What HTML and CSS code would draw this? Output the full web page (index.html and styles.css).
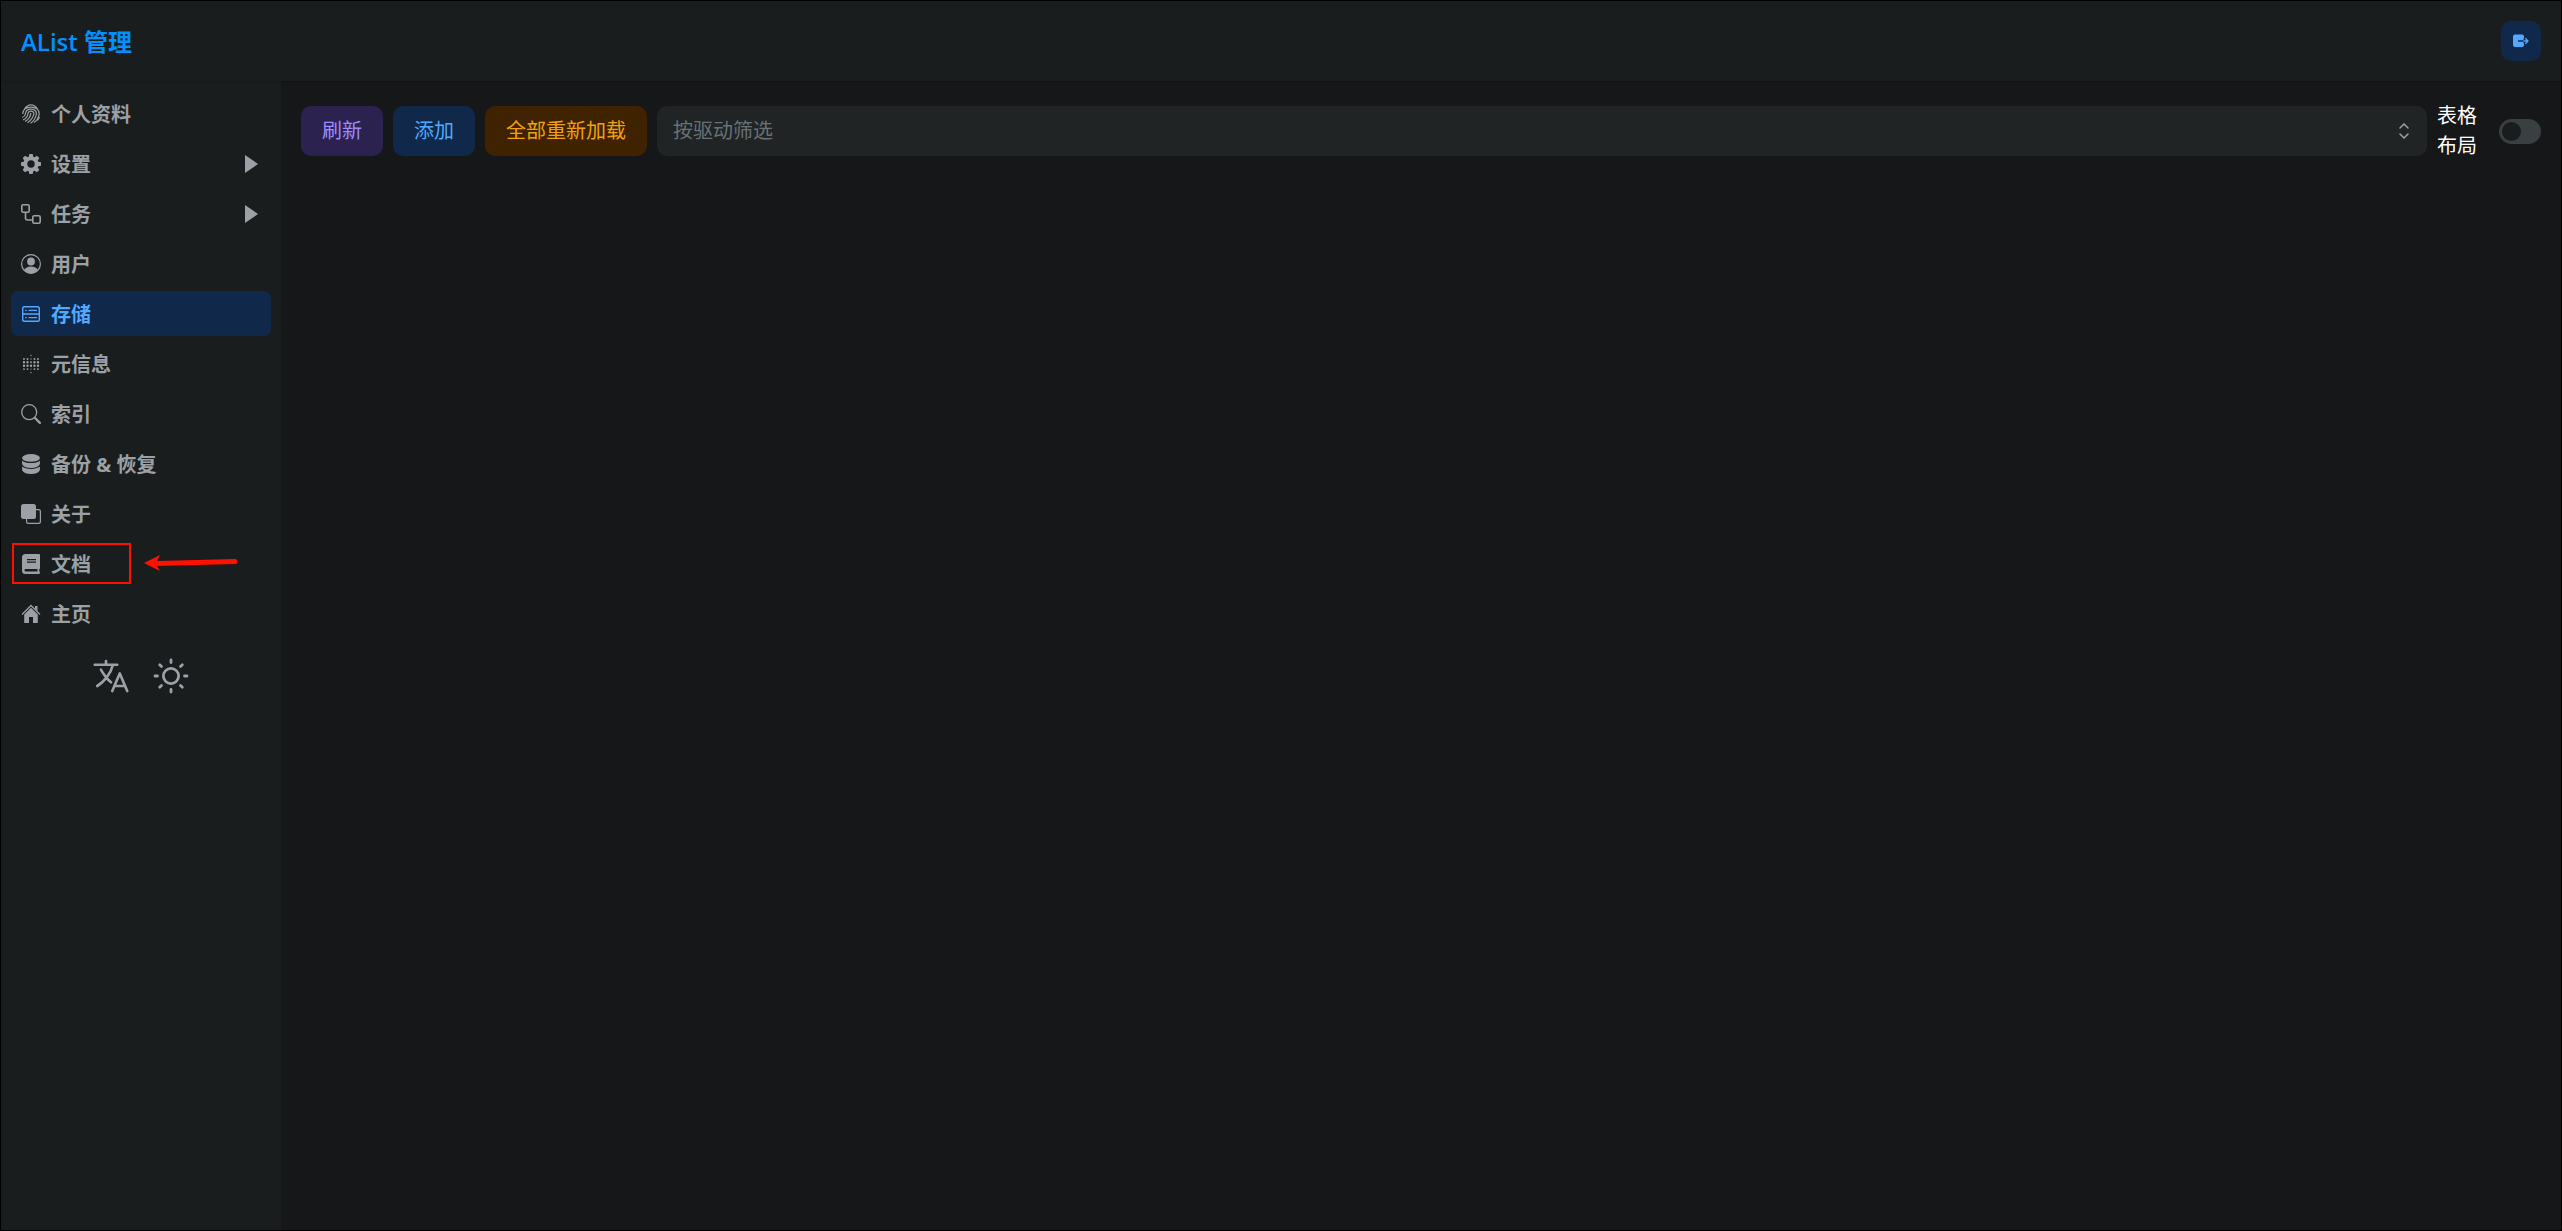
FILE: index.html
```html
<!DOCTYPE html>
<html lang="zh-CN">
<head>
<meta charset="utf-8">
<title>AList 管理</title>
<link rel="stylesheet" href="styles.css">
</head>
<body>
<header class="header">
  <a class="brand" href="#">AList 管理</a>
  <button class="logout" type="button" aria-label="退出">
    <svg viewBox="0 0 20 20" width="20" height="20"><path fill="currentColor" d="M4 3.500h7q2 0 2 2v2h-.5v1.800H7v1.400h5.500v1.800h.5v1.500q0 2-2 2H4q-2 0-2-2v-8.500q0-2 2-2z"/><path fill="none" stroke="currentColor" stroke-width="1.300" d="M12.500 10H17M14.300 7.200 17 10l-2.700 2.800"/></svg>
  </button>
</header>
<div class="body">
  <aside class="sidebar">
    <nav class="menu">
      <a class="item" href="#"><svg class="icon" viewBox="0 0 20 20"><g fill="none" stroke="currentColor" stroke-width="1.250"><path d="M3.500 5Q6 .8 10 .8T16.500 5M1.800 10Q2 3 10 3t8.200 7M4.500 9.500Q5 5 10 5t5.500 4.500M7 9.500Q7.500 7 10 7t3 2.500M1.300 13.500Q4 12.500 4.500 9.500M2 16Q6.500 14 7 9.500M4 17.500Q9.500 14.500 9.800 9M6.500 18.800Q12 15 13 9.500M9.500 19.300Q14.500 16 15.500 9.500M13 18.500Q17.500 15.500 18.200 10M16.500 16.500 18.500 13"/></g></svg><span class="name">个人资料</span></a>
      <a class="item" href="#"><svg class="icon" viewBox="0 0 20 20"><path fill="currentColor" fill-rule="evenodd" d="M8.300 0h3.400l.6 2.700 1.200.5L15.900 1.700l2.400 2.400-1.500 2.400.5 1.200 2.700.6v3.400l-2.700.6-.5 1.200 1.500 2.400-2.400 2.400-2.400-1.500-1.200.5-.6 2.700H8.300l-.6-2.700-1.200-.5-2.400 1.500-2.400-2.400 1.500-2.400-.5-1.200L0 11.700V8.300l2.700-.6.5-1.200L1.700 4.100l2.400-2.400 2.400 1.500 1.200-.5zM10 6.300a3.700 3.700 0 1 0 0 7.400 3.700 3.700 0 0 0 0-7.400z"/></svg><span class="name">设置</span><svg class="caret" viewBox="0 0 14 18"><path fill="currentColor" d="M1 0 14 9 1 18z"/></svg></a>
      <a class="item" href="#"><svg class="icon" viewBox="0 0 20 20"><g fill="none" stroke="currentColor" stroke-width="1.600"><rect x=".8" y=".8" width="7.400" height="7.400" rx="1.500"/><rect x="11.800" y="11.800" width="7.400" height="7.400" rx="1.500"/><path d="M4.500 8.200V14q0 2 2 2h5.300"/></g></svg><span class="name">任务</span><svg class="caret" viewBox="0 0 14 18"><path fill="currentColor" d="M1 0 14 9 1 18z"/></svg></a>
      <a class="item" href="#"><svg class="icon" viewBox="0 0 20 20"><circle cx="10" cy="10" r="9.400" fill="none" stroke="currentColor" stroke-width="1.200"/><circle cx="10" cy="7.500" r="3.900" fill="currentColor"/><path fill="currentColor" d="M3 16q2-3.500 7-3.500t7 3.500q-3 3.500-7 3.500T3 16z"/></svg><span class="name">用户</span></a>
      <a class="item active" href="#"><svg class="icon" viewBox="0 0 20 20"><g fill="none" stroke="currentColor" stroke-width="1.400"><rect x="1.700" y="2.700" width="16.600" height="14.600" rx="1.800"/><path d="M1.700 10h16.600M7.500 6.400H16M7.500 13.600H16M4.300 6.400h1.500M4.300 13.600h1.500"/></g></svg><span class="name">存储</span></a>
      <a class="item" href="#"><svg class="icon" viewBox="0 0 20 20"><g fill="none" stroke="currentColor" stroke-linecap="round"><path stroke-width="2.400" d="M3 8.300h0M6.500 8.300h0M13.500 8.300h0M17 8.300h0M3 11.700h0M6.500 11.700h0M10 11.700h0M13.500 11.700h0M17 11.700h0"/><path stroke-width="1.900" d="M3 5h0M6.500 5h0M10 8.300h0M13.500 5h0M17 5h0M3 15.100h0M6.500 15.100h0M13.500 15.100h0M17 15.100h0"/><path stroke-width="1.300" d="M10 1.500h0M10 5h0M10 15.100h0M10 18.500h0"/></g></svg><span class="name">元信息</span></a>
      <a class="item" href="#"><svg class="icon" viewBox="0 0 20 20"><circle cx="8.200" cy="8.200" r="7.500" fill="none" stroke="currentColor" stroke-width="1.300"/><path stroke="currentColor" stroke-width="2.200" stroke-linecap="round" d="m14 14 4.900 4.900"/></svg><span class="name">索引</span></a>
      <a class="item" href="#"><svg class="icon" viewBox="0 0 20 20"><g fill="currentColor"><ellipse cx="10" cy="3.900" rx="8.900" ry="3.900"/><path d="M1.100 6.400Q4 9 10 9t8.900-2.600V10q-1.600 3.900-8.900 3.900T1.100 10zM1.100 12.600Q4 15 10 15t8.900-2.400V16q-1.600 4-8.900 4t-8.900-4z"/></g></svg><span class="name">备份 &amp; 恢复</span></a>
      <a class="item" href="#"><svg class="icon" viewBox="0 0 20 20"><rect width="15" height="15" rx="2.500" fill="currentColor"/><path fill="none" stroke="currentColor" stroke-width="1.200" d="M15 5.600h2.500q1.900 0 1.900 1.900v10q0 1.900-1.900 1.900h-10q-1.900 0-1.900-1.900V15"/></svg><span class="name">关于</span></a>
      <a class="item" href="#"><svg class="icon" viewBox="0 0 20 20"><path fill="currentColor" fill-rule="evenodd" d="M4.500 0H18q1 0 1 1v13q0 .8-.7 1v2.600q.7.200.7 1.200T18 20H4.500Q1 20 1 16.500v-13Q1 0 4.500 0zM6 5v1.200h9V5zm0 2.500v1.200h9V7.500zM4.700 15q-1.200 0-1.200 1.200t1.200 1.300h11.800V15z"/></svg><span class="name">文档</span>
        <span class="mark"></span><svg class="arrow" viewBox="0 0 94 18"><path fill="#ff1000" d="M0 9 16 1l-3 6L91 5a2.500 2.500 0 0 1 0 5L13 12l3 5z"/></svg></a>
      <a class="item" href="#"><svg class="icon" viewBox="0 0 20 20"><path fill="none" stroke="currentColor" stroke-width="1.300" d="m1 10.500 9-9 9 9"/><path fill="currentColor" d="M14 2h2.500v5L14 4.500zM10 3.800l6.800 6.700V19H12v-6H8v6H3.200v-8.500z"/></svg><span class="name">主页</span></a>
    </nav>
    <div class="tools">
      <button class="tool" type="button" aria-label="语言"><svg viewBox="0 0 512 512" width="40" height="40"><path fill="none" stroke="currentColor" stroke-width="34" stroke-linecap="round" stroke-linejoin="round" d="M48 112h288M192 64v48M272 448l96-224 96 224M301.500 384h133M281.300 112S257 206 199 277 80 384 80 384M256 336s-35-27-72-75-56-85-56-85"/></svg></button>
      <button class="tool" type="button" aria-label="主题"><svg viewBox="0 0 40 40" width="40" height="40"><g fill="none" stroke="currentColor" stroke-width="2.800" stroke-linecap="round"><circle cx="20" cy="20" r="7.600"/><path d="M20 4v2.500M20 33.500V36M4 20h2.500M33.500 20H36M8.700 8.700l1.800 1.800M29.500 29.500l1.800 1.800M31.300 8.700l-1.800 1.800M10.500 29.500l-1.800 1.800"/></g></svg></button>
    </div>
  </aside>
  <main class="content">
    <div class="bar">
      <button class="btn accent" type="button">刷新</button>
      <button class="btn info" type="button">添加</button>
      <button class="btn warning" type="button">全部重新加载</button>
      <div class="select">
        <select class="filter" aria-label="按驱动筛选"><option>按驱动筛选</option></select>
        <svg class="updown" viewBox="0 0 10 16" width="10" height="16"><path fill="none" stroke="currentColor" stroke-width="1.500" stroke-linecap="round" d="M1 5l4-4 4 4M1 11l4 4 4-4"/></svg>
      </div>
      <label class="layout"><span class="layout-text">表格布局</span><input class="switch" type="checkbox" role="switch"></label>
    </div>
  </main>
</div>
</body>
</html>
```
FILE: styles.css
```css
* { box-sizing: border-box; }
body {
  margin: 0;
  min-height: 100vh;
  display: flex;
  flex-direction: column;
  border: 1px solid #000;
  background: #161718;
  color: #ecedee;
  font: 20px/30px "Open Sans", "Noto Sans CJK SC", sans-serif;
}
button, select { font: inherit; border: 0; cursor: pointer; }
a { text-decoration: none; }
svg { display: block; flex: none; }
.header {
  position: relative;
  height: 80px;
  padding: 0 20px;
  display: flex;
  align-items: center;
  justify-content: space-between;
  background: #1a1d1e;
  box-shadow: 0 1px 3px rgba(0, 0, 0, .2);
}
.brand { padding-top: 2px; color: #0091ff; font-size: 24px; font-weight: 600; }
.logout {
  width: 40px;
  height: 40px;
  padding: 0;
  display: grid;
  place-items: center;
  border-radius: 10px;
  background: #10294a;
  color: #52a9ff;
}
.body { flex: 1; display: flex; }
.sidebar {
  width: 280px;
  flex: none;
  padding: 10px;
  background: #1a1d1e;
}
.menu { display: flex; flex-direction: column; gap: 5px; }
.item {
  position: relative;
  height: 45px;
  padding: 0 10px;
  display: flex;
  align-items: center;
  gap: 10px;
  border-radius: 7px;
  color: #9ba1a6;
  font-weight: 700;
}
.active { background: #10294a; color: #52a9ff; }
.icon { width: 20px; height: 20px; }
.name { padding-top: 2px; }
.caret { width: 14px; height: 18px; margin: 0 3px 0 auto; }
.mark {
  position: absolute;
  left: 1px;
  top: 2px;
  width: 119px;
  height: 41px;
  border: 2px solid #ff1000;
}
.arrow { position: absolute; left: 133px; top: 13px; width: 94px; height: 18px; }
.tools { display: flex; justify-content: center; gap: 20px; padding: 20px 0; }
.tool { padding: 0; background: none; color: #9ba1a6; }
.content { flex: 1; min-width: 0; padding: 20px; }
.bar { display: flex; align-items: center; gap: 10px; }
.btn { height: 50px; padding: 0 21px; border-radius: 10px; flex: none; }
.accent { background: #2c2250; color: #9e8cfc; }
.info { background: #10294a; color: #52a9ff; }
.warning { background: #3f2200; color: #f1a10d; }
.select { position: relative; flex: 1; min-width: 0; }
.filter {
  display: block;
  width: 100%;
  height: 50px;
  padding: 0 16px;
  appearance: none;
  border-radius: 10px;
  background: #202425;
  color: #697177;
}
.updown { position: absolute; right: 18px; top: 17px; color: #9ba1a6; pointer-events: none; }
.layout { display: flex; align-items: center; gap: 21px; }
.layout-text { width: 41px; color: #fff; }
.switch {
  width: 42px;
  height: 25px;
  margin: 0;
  padding: 3px;
  display: flex;
  appearance: none;
  border-radius: 13px;
  background: #3a3f42;
}
.switch::before { content: ""; width: 19px; height: 19px; border-radius: 50%; background: #1a1d1e; }
.switch:checked { background: #0091ff; justify-content: flex-end; }
```
